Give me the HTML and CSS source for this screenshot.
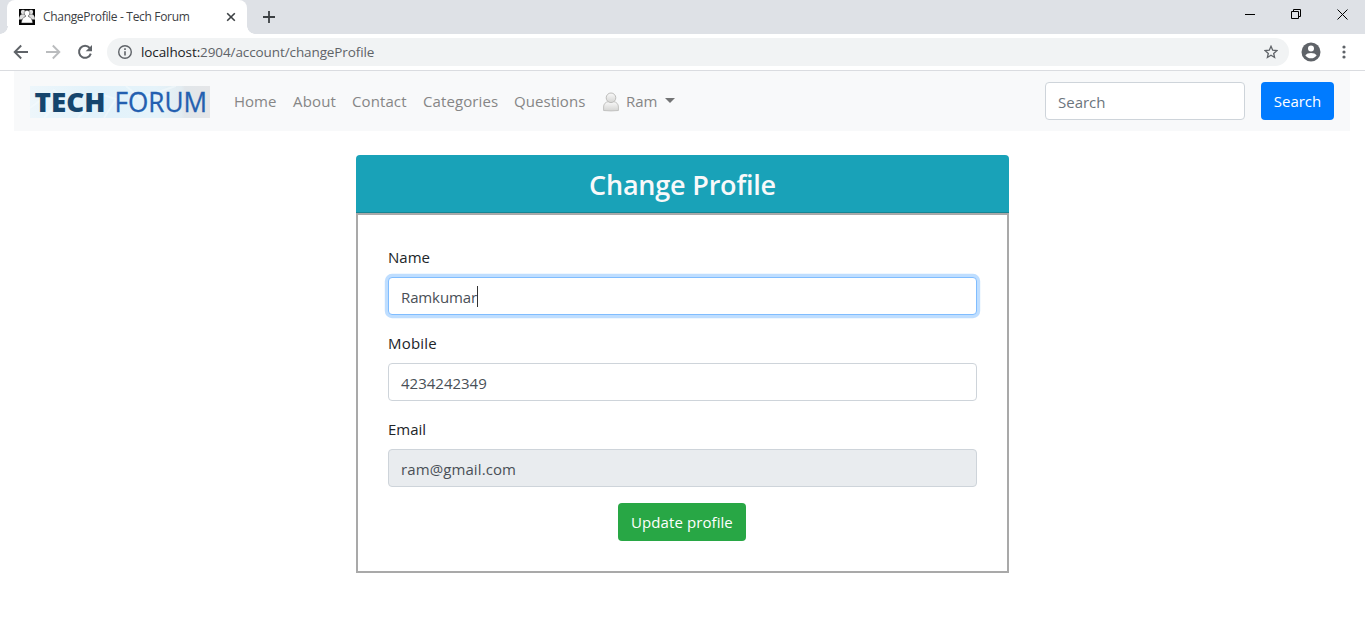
FILE: index.html
```html
<!DOCTYPE html>
<html lang="en">
<head>
<meta charset="utf-8">
<title>ChangeProfile - Tech Forum</title>
<link rel="stylesheet" href="styles.css">
</head>
<body>
<header class="browser">
  <div class="tabstrip">
    <div class="tab">
      <svg class="favicon" width="16" height="16" viewBox="0 0 16 16"><path d="M0 0h16v16H0z" fill="#050505"/><g fill="#dedede"><circle cx="4" cy="3" r="2.200"/><circle cx="12" cy="3" r="2.200"/><path d="M0 10.500Q.2 6 3 5.300h3v5.200zM16 10.500Q15.800 6 13 5.300h-3v5.200z"/></g><path d="M8 1.300a2.900 2.900 0 0 1 1.700 5.200v1.200q3.300.8 4 6.300H2.300q.7-5.500 4-6.300V6.500A2.900 2.900 0 0 1 8 1.300z" fill="#fff" stroke="#333" stroke-width=".5"/></svg>
      <span class="tab-title">ChangeProfile - Tech Forum</span>
      <svg class="tab-close" width="10" height="10" viewBox="0 0 10 10"><path d="M1.200 1.200l7.600 7.600M8.800 1.200L1.200 8.800" stroke="#3c4043" stroke-width="1.600"/></svg>
    </div>
    <svg class="new-tab" width="12" height="12" viewBox="0 0 12 12"><path d="M6 0v12M0 6h12" stroke="#3c4043" stroke-width="1.800"/></svg>
    <div class="window-controls">
      <svg width="10" height="11" viewBox="0 0 10 11"><path d="M0 5.500h10" stroke="#000"/></svg>
      <svg width="10" height="10" viewBox="0 0 10 10" fill="none" stroke="#000"><path d="M.5 2.500h7v7h-7zM2.500 2.500v-2h7v7h-2"/></svg>
      <svg width="11" height="11" viewBox="0 0 11 11"><path d="M.5.500l10 10M10.500.500l-10 10" stroke="#000"/></svg>
    </div>
  </div>
  <div class="toolbar">
    <svg class="back" width="16" height="16" viewBox="0 0 16 16" fill="none" stroke="#5f6368" stroke-width="1.900"><path d="M15 8H2M8.200 1.500L1.700 8l6.500 6.500"/></svg>
    <svg class="forward" width="16" height="16" viewBox="0 0 16 16" fill="none" stroke="#babcbe" stroke-width="1.900"><path d="M1 8h13M7.800 1.500L14.300 8l-6.500 6.500"/></svg>
    <svg class="reload" width="16" height="16" viewBox="0 0 16 16"><path d="M12.700 4A6 6 0 1 0 13.800 9.600" fill="none" stroke="#5f6368" stroke-width="2"/><path d="M15 1v6.300H8.700z" fill="#5f6368"/></svg>
    <div class="omnibox">
      <svg class="info" width="14" height="14" viewBox="0 0 14 14"><circle cx="7" cy="7" r="6.300" fill="none" stroke="#5f6368" stroke-width="1.400"/><path d="M7 6.200v4.300M7 3.300v1.600" stroke="#5f6368" stroke-width="1.600"/></svg>
      <span class="url"><span class="host">localhost:</span>2904/account/changeProfile</span>
      <svg class="star" width="14" height="14" viewBox="0 0 14 14"><path d="M7 1.300l1.700 3.900 4.200.4-3.200 2.800.9 4.100L7 10.300l-3.600 2.200.9-4.100L1.100 5.600l4.200-.4z" fill="none" stroke="#5f6368" stroke-width="1.300"/></svg>
    </div>
    <svg class="avatar" width="20" height="20" viewBox="0 0 20 20"><circle cx="10" cy="10" r="9.500" fill="#5f6368"/><circle cx="10" cy="6.500" r="3" fill="#fff"/><path d="M4.300 13.200Q6 10.900 10 10.900t5.700 2.300Q13.800 16.300 10 16.300t-5.700-3.100z" fill="#fff"/></svg>
    <svg class="menu" width="4" height="14" viewBox="0 0 4 14" fill="#5f6368"><circle cx="2" cy="2" r="1.600"/><circle cx="2" cy="7" r="1.600"/><circle cx="2" cy="12" r="1.600"/></svg>
  </div>
</header>
<nav class="navbar">
  <svg class="brand" width="180" height="40" viewBox="0 -4 180 40">
    <defs><linearGradient id="ice"><stop offset="0" stop-color="#edf6fb"/><stop offset=".35" stop-color="#e2f2fa"/><stop offset=".7" stop-color="#e5f3fa"/><stop offset=".84" stop-color="#e3ecf1"/><stop offset=".86" stop-color="#e1e6ea"/><stop offset="1" stop-color="#e5e6e8"/></linearGradient></defs>
    <path d="M0 0h180v32H0z" fill="url(#ice)"/>
    <path d="M0 22l24-18 8 8-18 20M48 32l22-24 16 5-12 19M96 0l14 12 36-12" fill="none" stroke="#f5fbfe" stroke-width="2" opacity=".5"/>
    <text class="brand-tech" x="4.500" y="26" textLength="71" lengthAdjust="spacingAndGlyphs">TECH</text>
    <text class="brand-forum" x="84.500" y="26" textLength="92.500" lengthAdjust="spacingAndGlyphs">FORUM</text>
  </svg>
  <a class="link home">Home</a>
  <a class="link about">About</a>
  <a class="link contact">Contact</a>
  <a class="link categories">Categories</a>
  <a class="link questions">Questions</a>
  <a class="account">
    <svg width="16" height="20" viewBox="0 0 16 20"><defs><linearGradient id="person" x2="0" y2="1"><stop stop-color="#fafafa"/><stop offset="1" stop-color="#d4d4d2"/></linearGradient></defs><path d="M.6 18.500V15q0-4.500 5-5.500h4.800q5 1 5 5.500v3.500q-7.400.8-14.800 0z" fill="url(#person)" stroke="#c2c2c0"/><circle cx="8" cy="5.800" r="4.800" fill="url(#person)" stroke="#bdbdbb"/></svg>
    <span class="account-name">Ram</span>
    <span class="caret"></span>
  </a>
  <form class="search">
    <input class="control search-input" placeholder="Search">
    <button class="btn btn-primary" type="button">Search</button>
  </form>
</nav>
<main class="card">
  <h1 class="card-title"><span>Change Profile</span></h1>
  <form class="card-body">
    <label class="label">Name</label>
    <div class="control field focused"><span class="v-name">Ramkumar</span><i class="cursor"></i></div>
    <label class="label l-mobile">Mobile</label>
    <div class="control field"><span>4234242349</span></div>
    <label class="label">Email</label>
    <div class="control field disabled"><span class="v-email">ram@gmail.com</span></div>
    <button class="btn btn-success" type="button">Update profile</button>
  </form>
</main>
</body>
</html>
```
FILE: styles.css
```css
* { box-sizing: border-box; }
body { margin: 0; height: 641px; overflow: hidden; background: #fff; color: #212529; font: 15px/24px "Open Sans", "Noto Sans", sans-serif; }
svg { display: block; flex: none; }
.browser { height: 71px; border-bottom: 1px solid #dadce0; font-size: 12px; }
.tabstrip { display: flex; height: 34px; padding-left: 7px; background: #dee1e6; }
.tab { position: relative; display: flex; align-items: center; width: 240px; height: 34px; padding: 0 11px 0 12px; border-radius: 8px 8px 0 0; background: #fff; color: #3c4043; }
.tab::before, .tab::after { content: ""; position: absolute; bottom: 0; width: 8px; height: 8px; }
.tab::before { left: -7px; background: radial-gradient(circle at 0 0, #dee1e6 7.500px, #fff 8px); }
.tab::after { right: -8px; background: radial-gradient(circle at 100% 0, #dee1e6 7.500px, #fff 8px); }
.tab-title { margin-left: 8px; letter-spacing: -.32px; white-space: nowrap; }
.tab-close { margin-left: auto; }
.new-tab { margin: 11px 0 0 16px; }
.window-controls { display: flex; align-items: flex-start; gap: 36px; margin: 9px 17px 0 auto; }
.toolbar { display: flex; align-items: center; height: 36px; padding-left: 13px; }
.forward { margin-left: 16px; }
.reload { margin-left: 16px; }
.omnibox { display: flex; align-items: center; width: 1182px; height: 28px; margin-left: 14px; padding: 0 11px; border-radius: 14px; background: #f1f3f4; }
.url { margin-left: 9px; font-size: 13.500px; letter-spacing: -.1px; color: #5f6368; }
.host { color: #202124; }
.star { margin-left: auto; }
.avatar { margin-left: 12px; }
.menu { margin-left: 20.500px; }
.navbar { display: flex; align-items: center; height: 60px; margin: 0 15px 0 14px; padding: 0 16px; background: #f8f9fa; }
.brand { margin-top: 2px; overflow: visible; }
.brand-tech { font: 800 26.500px "Open Sans", sans-serif; fill: #15456d; }
.brand-forum { font: 400 26.500px "Open Sans", sans-serif; fill: #235fb0; stroke: #235fb0; stroke-width: .3px; }
.link { margin-right: 16px; color: #868686; white-space: nowrap; }
.home { width: 43px; margin-left: 24px; }
.about { width: 43px; letter-spacing: .15px; }
.contact { width: 55px; letter-spacing: .1px; }
.categories { width: 75px; letter-spacing: .1px; }
.questions { width: 72px; letter-spacing: .05px; }
.account { display: flex; align-items: center; margin-left: 1px; color: #868686; }
.account svg { margin-top: 2px; }
.account-name { margin-left: 7px; width: 32px; }
.caret { margin: -2px 0 0 7px; border: 5px solid transparent; border-top-color: #737475; border-bottom: 0; }
.search { display: flex; gap: 16px; margin-left: auto; }
.control { height: 38px; padding: 2px 12px 0; border: 1px solid #ced4da; border-radius: 4px; background: #fff; color: #495057; font: 15px/24px "Open Sans", sans-serif; }
.search-input { width: 200px; }
.search-input::placeholder { color: #6c757d; opacity: 1; }
.btn { height: 38px; padding: 0; border: 0; border-radius: 4px; color: #fff; font: 15px/24px "Open Sans", sans-serif; white-space: nowrap; }
.btn-primary { width: 73px; background: #007bff; }
.btn-success { display: block; width: 128px; margin: 16px auto 0 230px; background: #28a745; letter-spacing: .08px; }
.card { width: 653px; margin: 24px 0 0 356px; }
.card-title { display: flex; justify-content: center; align-items: center; height: 58px; margin: 0; padding-top: 2px; border-bottom: 1px solid #168594; border-radius: 4px 4px 0 0; background: #19a2b8; color: #f8f9fa; font: 600 27px/34px "Open Sans", sans-serif; letter-spacing: -.2px; }
.card-body { height: 360px; padding: 30px 30px 0; border: 2px solid #a9a9a9; }
.label { display: block; height: 24px; margin-bottom: 8px; }
.l-mobile { letter-spacing: .2px; }
.field { display: flex; align-items: center; margin-bottom: 16px; }
.focused { border-color: #80bdff; box-shadow: 0 0 0 3.200px #bfdeff; }
.disabled { background: #e9ecef; }
.v-name { letter-spacing: -.12px; }
.v-email { letter-spacing: .1px; }
.cursor { width: 1px; height: 21px; margin-top: -2px; background: #333; }
```
